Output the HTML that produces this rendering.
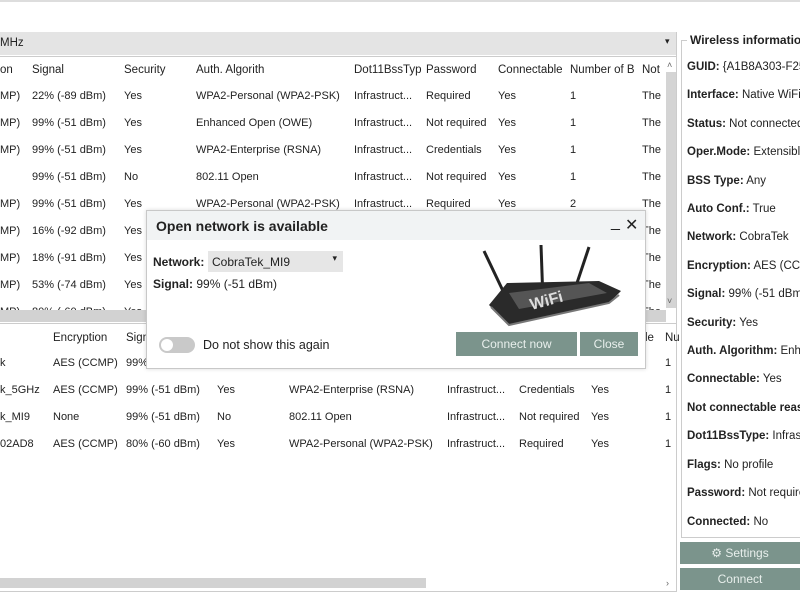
<!DOCTYPE html>
<html><head><meta charset="utf-8"><style>
*{margin:0;padding:0;box-sizing:border-box}
body{width:800px;height:600px;overflow:hidden;background:#fff;font-family:"Liberation Sans",sans-serif;font-size:11.5px;color:#222;position:relative}
.a{position:absolute;white-space:nowrap}
b{font-weight:bold}
.btn{position:absolute;background:#7b948c;color:#e8efec;text-align:center;font-size:12px}
.t{line-height:27px;font-size:11px}
</style></head><body>
<div class="a" style="left:0;top:0;width:800px;height:2px;background:#ddd"></div>
<div class="a" style="left:0;top:32px;width:676px;height:23px;background:#e4e4e4"></div>
<div class="a" style="left:0;top:37px">MHz</div>
<div class="a" style="left:665px;top:36px;font-size:9px">▾</div>
<div class="a" style="left:0;top:56px;width:676px;height:1px;background:#ccc"></div>
<div class="a" style="left:676px;top:32px;width:1px;height:560px;background:#ccc"></div>
<div class="a" style="left:666px;top:72px;width:10px;height:236px;background:#d4d4d4"></div>
<div class="a" style="left:667px;top:60px;font-size:9px;color:#666">˄</div>
<div class="a" style="left:667px;top:296px;font-size:9px;color:#666">˅</div>
<div class="a" style="left:0;top:64px">on</div>
<div class="a" style="left:32px;top:64px">Signal</div>
<div class="a" style="left:124px;top:64px">Security</div>
<div class="a" style="left:196px;top:64px">Auth. Algorith</div>
<div class="a" style="left:354px;top:64px">Dot11BssTyp</div>
<div class="a" style="left:426px;top:64px">Password</div>
<div class="a" style="left:498px;top:64px">Connectable</div>
<div class="a" style="left:570px;top:64px">Number of B</div>
<div class="a" style="left:642px;top:64px">Not</div>
<div style="position:absolute;left:0;top:83px;width:664px;height:227px;overflow:hidden">
<div class="a t" style="left:0;top:0">MP)<br>MP)<br>MP)<br>&nbsp;<br>MP)<br>MP)<br>MP)<br>MP)<br>MP)</div>
<div class="a t" style="left:32px;top:0">22% (-89 dBm)<br>99% (-51 dBm)<br>99% (-51 dBm)<br>99% (-51 dBm)<br>99% (-51 dBm)<br>16% (-92 dBm)<br>18% (-91 dBm)<br>53% (-74 dBm)<br>80% (-60 dBm)</div>
<div class="a t" style="left:124px;top:0">Yes<br>Yes<br>Yes<br>No<br>Yes<br>Yes<br>Yes<br>Yes<br>Yes</div>
<div class="a t" style="left:196px;top:0">WPA2-Personal (WPA2-PSK)<br>Enhanced Open (OWE)<br>WPA2-Enterprise (RSNA)<br>802.11 Open<br>WPA2-Personal (WPA2-PSK)</div>
<div class="a t" style="left:354px;top:0">Infrastruct...<br>Infrastruct...<br>Infrastruct...<br>Infrastruct...<br>Infrastruct...</div>
<div class="a t" style="left:426px;top:0">Required<br>Not required<br>Credentials<br>Not required<br>Required</div>
<div class="a t" style="left:498px;top:0">Yes<br>Yes<br>Yes<br>Yes<br>Yes</div>
<div class="a t" style="left:570px;top:0">1<br>1<br>1<br>1<br>2</div>
<div class="a t" style="left:642px;top:0">The<br>The<br>The<br>The<br>The<br>The<br>The<br>The<br>The</div>
</div>
<div class="a" style="left:0;top:310px;width:666px;height:12px;background:#d2d2d2"></div>
<div class="a" style="left:0;top:323px;width:676px;height:1px;background:#ccc"></div>
<div class="a" style="left:53px;top:332px">Encryption</div>
<div class="a" style="left:126px;top:332px">Signal</div>
<div class="a" style="left:645px;top:332px">le</div>
<div class="a" style="left:665px;top:332px">Nu</div>
<div class="a t" style="left:0;top:350px">k<br>k_5GHz<br>k_MI9<br>02AD8</div>
<div class="a t" style="left:53px;top:350px">AES (CCMP)<br>AES (CCMP)<br>None<br>AES (CCMP)</div>
<div class="a t" style="left:126px;top:350px">99% (-51 dBm)<br>99% (-51 dBm)<br>99% (-51 dBm)<br>80% (-60 dBm)</div>
<div class="a t" style="left:217px;top:350px">&nbsp;<br>Yes<br>No<br>Yes</div>
<div class="a t" style="left:289px;top:350px">&nbsp;<br>WPA2-Enterprise (RSNA)<br>802.11 Open<br>WPA2-Personal (WPA2-PSK)</div>
<div class="a t" style="left:447px;top:350px">&nbsp;<br>Infrastruct...<br>Infrastruct...<br>Infrastruct...</div>
<div class="a t" style="left:519px;top:350px">&nbsp;<br>Credentials<br>Not required<br>Required</div>
<div class="a t" style="left:591px;top:350px">&nbsp;<br>Yes<br>Yes<br>Yes</div>
<div class="a t" style="left:665px;top:350px">1<br>1<br>1<br>1</div>
<div class="a" style="left:0;top:578px;width:426px;height:10px;background:#d2d2d2"></div>
<div class="a" style="left:666px;top:578px;font-size:9px;color:#666">›</div>
<div class="a" style="left:0;top:591px;width:676px;height:1px;background:#ccc"></div>
<div class="a" style="left:681px;top:40px;width:130px;height:498px;border:1px solid #ccc"></div>
<div class="a" style="left:687px;top:33px;background:#fff;padding:0 3px;font-weight:bold;font-size:12px">Wireless information</div>
<div class="a" style="left:687px;top:53px;line-height:28.4px;font-size:11.5px">
<b>GUID:</b> {A1B8A303-F25<br><b>Interface:</b> Native WiFi<br><b>Status:</b> Not connected<br><b>Oper.Mode:</b> Extensible<br><b>BSS Type:</b> Any<br><b>Auto Conf.:</b> True<br><b>Network:</b> CobraTek<br><b>Encryption:</b> AES (CCMP<br><b>Signal:</b> 99% (-51 dBm<br><b>Security:</b> Yes<br><b>Auth. Algorithm:</b> Enh<br><b>Connectable:</b> Yes<br><b>Not connectable reas</b><br><b>Dot11BssType:</b> Infrast<br><b>Flags:</b> No profile<br><b>Password:</b> Not require<br><b>Connected:</b> No</div>
<div class="btn" style="left:680px;top:542px;width:120px;height:22px;line-height:22px">⚙ Settings</div>
<div class="btn" style="left:680px;top:568px;width:120px;height:22px;line-height:22px">Connect</div>
<div class="a" style="left:146px;top:210px;width:500px;height:159px;background:#fff;border:1px solid #c8c8c8;box-shadow:0 0 4px rgba(0,0,0,.15);font-size:12px">
<div class="a" style="left:0;top:0;width:498px;height:29px;background:#f1f3f4"></div>
<div class="a" style="left:9px;top:7px;font-size:14px;font-weight:bold">Open network is available</div>
<div class="a" style="left:464px;top:3px;font-size:16px">_</div>
<div class="a" style="left:478px;top:4px;font-size:16px">✕</div>
<div class="a" style="left:6px;top:44px"><b>Network:</b></div>
<div class="a" style="left:61px;top:40px;width:135px;height:21px;background:#e6e6e6;padding:4px 4px">CobraTek_MI9<span style="position:absolute;right:6px;top:2px;font-size:9px">▾</span></div>
<div class="a" style="left:6px;top:66px"><b>Signal:</b> 99% (-51 dBm)</div>
<svg class="a" style="left:332px;top:32px" width="148" height="90" viewBox="0 0 148 90">
<line x1="5" y1="8" x2="25" y2="50" stroke="#222" stroke-width="3"/>
<line x1="62" y1="2" x2="64" y2="58" stroke="#222" stroke-width="3"/>
<line x1="110" y1="4" x2="96" y2="46" stroke="#222" stroke-width="3"/>
<path d="M10 62 L28 40 L120 38 L142 48 L130 60 L30 82 Z" fill="#2a2a2a"/>
<path d="M30 50 L110 40 L128 50 L40 66 Z" fill="#555"/>
<text x="50" y="62" font-size="16" font-weight="bold" fill="#ddd" transform="rotate(-15 70 55)">WiFi</text>
<path d="M12 64 L30 82 L130 60 L140 52" stroke="#777" stroke-width="2" fill="none"/>
</svg>
<div class="a" style="left:12px;top:126px;width:36px;height:16px;border-radius:8px;background:#c9c9c9"></div>
<div class="a" style="left:14px;top:128px;width:12px;height:12px;border-radius:6px;background:#fff"></div>
<div class="a" style="left:56px;top:127px;font-size:12.5px">Do not show this again</div>
<div class="btn" style="left:309px;top:121px;width:121px;height:24px;line-height:24px">Connect now</div>
<div class="btn" style="left:433px;top:121px;width:58px;height:24px;line-height:24px">Close</div>
</div>
</body></html>
